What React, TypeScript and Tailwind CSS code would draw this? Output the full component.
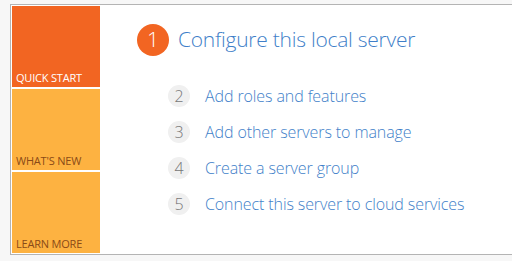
import React from "react";

const items = [
  { n: "2", t: "Add roles and features" },
  { n: "3", t: "Add other servers to manage" },
  { n: "4", t: "Create a server group" },
  { n: "5", t: "Connect this server to cloud services" },
];

export default function App() {
  return (
    <div
      className="w-[512px] h-[261px] bg-[#f7f7f7] pt-[4px] pl-[10px] overflow-hidden"
      style={{ fontFamily: '"Open Sans", "Noto Sans", sans-serif' }}
    >
      <div className="h-[251px] border-t border-b border-l border-[#b4b4b4] bg-white flex p-[1px]">
        <div className="w-[88px] flex flex-col gap-[2px]">
          <div className="h-[81px] bg-[#f26522] flex items-end px-[4px] pb-[2px]">
            <span className="text-[11px] text-white leading-[14px] tracking-[-0.2px]">QUICK START</span>
          </div>
          <div className="h-[81px] bg-[#fdb241] flex items-end px-[4px] pb-[2px]">
            <span className="text-[11px] text-[#8a4a17] leading-[14px] tracking-[-0.2px]">WHAT'S NEW</span>
          </div>
          <div className="h-[81px] bg-[#fdb241] flex items-end px-[4px] pb-[2px]">
            <span className="text-[11px] text-[#8a4a17] leading-[14px] tracking-[-0.2px]">LEARN MORE</span>
          </div>
        </div>
        <div className="flex-1 pl-[37px] pt-[18px]">
          <div className="flex items-center gap-[9px]">
            <div className="w-[32px] h-[32px] rounded-full bg-[#f26522] flex items-center justify-center text-white text-[21px] font-light">
              1
            </div>
            <div className="text-[21px] text-[#3f7fc9] font-light tracking-[-0.25px]">Configure this local server</div>
          </div>
          <div className="pl-[31px] pt-[28px] flex flex-col gap-[13px]">
            {items.map((it) => (
              <div key={it.n} className="flex items-center gap-[15px] h-[23px]">
                <div className="w-[22px] h-[22px] rounded-full bg-[#f0f0f0] flex items-center justify-center text-[#777] text-[16px] font-light">
                  {it.n}
                </div>
                <div className="text-[16px] text-[#3f7fc9] font-light tracking-[-0.1px]">{it.t}</div>
              </div>
            ))}
          </div>
        </div>
      </div>
    </div>
  );
}
